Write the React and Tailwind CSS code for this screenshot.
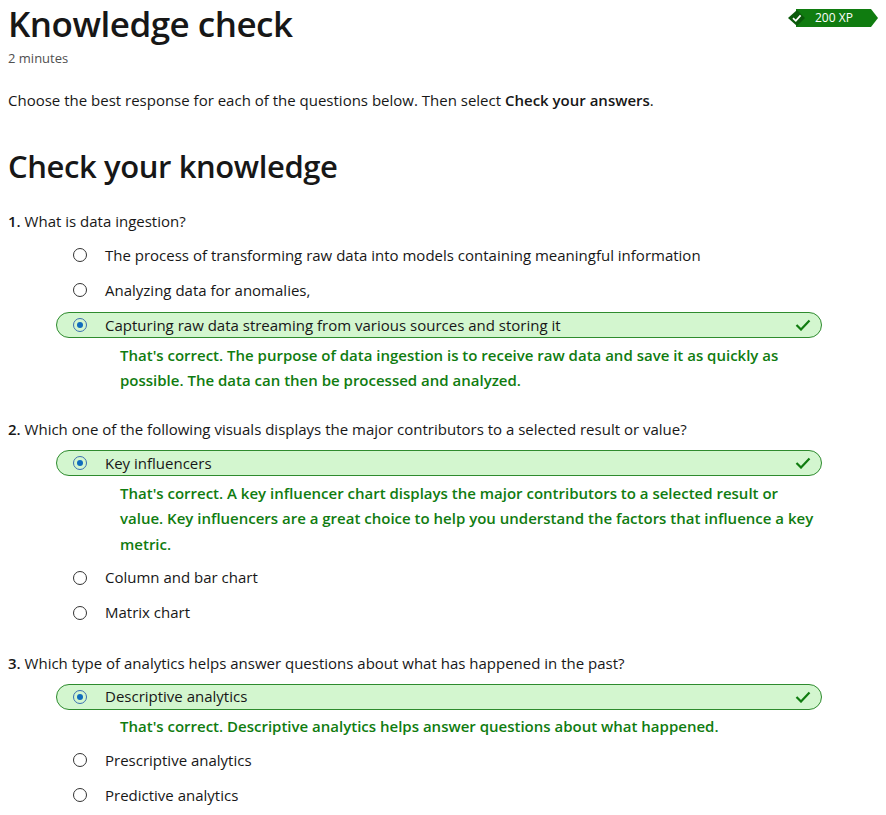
import React from 'react';

const questions = [
    {
        num: '1.',
        text: 'What is data ingestion?',
        options: [
            { label: 'The process of transforming raw data into models containing meaningful information' },
            { label: 'Analyzing data for anomalies,' },
            {
                label: 'Capturing raw data streaming from various sources and storing it',
                correct: true,
                feedback: "That's correct. The purpose of data ingestion is to receive raw data and save it as quickly as possible. The data can then be processed and analyzed.",
            },
        ],
    },
    {
        num: '2.',
        text: 'Which one of the following visuals displays the major contributors to a selected result or value?',
        options: [
            {
                label: 'Key influencers',
                correct: true,
                feedback: "That's correct. A key influencer chart displays the major contributors to a selected result or value. Key influencers are a great choice to help you understand the factors that influence a key metric.",
            },
            { label: 'Column and bar chart' },
            { label: 'Matrix chart' },
        ],
    },
    {
        num: '3.',
        text: 'Which type of analytics helps answer questions about what has happened in the past?',
        options: [
            {
                label: 'Descriptive analytics',
                correct: true,
                feedback: "That's correct. Descriptive analytics helps answer questions about what happened.",
            },
            { label: 'Prescriptive analytics' },
            { label: 'Predictive analytics' },
        ],
    },
];

const XpBadge = () => (
    <div className="relative w-[90px] h-[18px] mt-[9px] flex items-center">
        <svg className="absolute inset-0" width="90" height="18" viewBox="0 0 90 18">
            <polygon points="8,0 83,0 90,9 83,18 8,18" fill="#107c10" />
            <polygon points="0,9 9,1 17,9 9,17" fill="#0b5a0b" />
            <path d="M5 9.2 L7.8 11.8 L12.6 6.4" stroke="#fff" strokeWidth="1.8" fill="none" />
        </svg>
        <span className="relative pl-[27px] text-[12px] leading-none text-white">200 XP</span>
    </div>
);

const Radio = ({ checked }) => (
    checked ? (
        <span className="w-[14px] h-[14px] rounded-full border border-[#3b6fb0] flex items-center justify-center shrink-0">
            <span className="w-[6px] h-[6px] rounded-full bg-[#0f6cbd]" />
        </span>
    ) : (
        <span className="w-[14px] h-[14px] rounded-full border border-[#333] shrink-0" />
    )
);

const Option = ({ option }) => (
    <>
        <div className="h-[35px] flex items-center">
            {option.correct ? (
                <div className="w-[766px] h-[26px] rounded-full border border-[#2e8b2e] bg-[#d3f6cf] flex items-center pl-[16px] pr-[10px]">
                    <Radio checked />
                    <span className="ml-[18px] flex-1">{option.label}</span>
                    <svg width="16" height="12" viewBox="0 0 16 12">
                        <path d="M1.5 6 L6 10.5 L14.5 1.5" stroke="#107c10" strokeWidth="2.2" fill="none" />
                    </svg>
                </div>
            ) : (
                <div className="flex items-center pl-[17px]">
                    <Radio />
                    <span className="ml-[18px]">{option.label}</span>
                </div>
            )}
        </div>
        {option.feedback && (
            <p className="pl-[64px] pr-[60px] pb-[3px] text-[#107c10] font-semibold leading-[25.5px]">
                {option.feedback}
            </p>
        )}
    </>
);

export default function App() {
    return (
        <div className="bg-white px-[8px] text-[15px] text-[#171717] font-['Open_Sans',sans-serif] min-h-[815px]">
            <div className="flex justify-between">
                <h1 className="text-[35px] leading-[48px] font-semibold tracking-[-0.5px]">Knowledge check</h1>
                <XpBadge />
            </div>
            <p className="text-[13px] leading-[20px] text-[#505050]">2 minutes</p>
            <p className="mt-[20px] leading-[24px]">
                Choose the best response for each of the questions below. Then select <b className="font-semibold">Check your answers</b>.
            </p>
            <h2 className="mt-[34px] text-[31px] leading-[40px] font-semibold tracking-[-0.4px]">Check your knowledge</h2>
            <div className="mt-[23px]">
                {questions.map((q, i) => (
                    <div key={i} className={i > 0 ? 'mt-[20.5px]' : ''}>
                        <p className="leading-[24px]">
                            <b className="font-semibold">{q.num}</b> {q.text}
                        </p>
                        <div className="mt-[4.5px] pl-[48px]">
                            {q.options.map((o, j) => (
                                <Option key={j} option={o} />
                            ))}
                        </div>
                    </div>
                ))}
            </div>
        </div>
    );
}
